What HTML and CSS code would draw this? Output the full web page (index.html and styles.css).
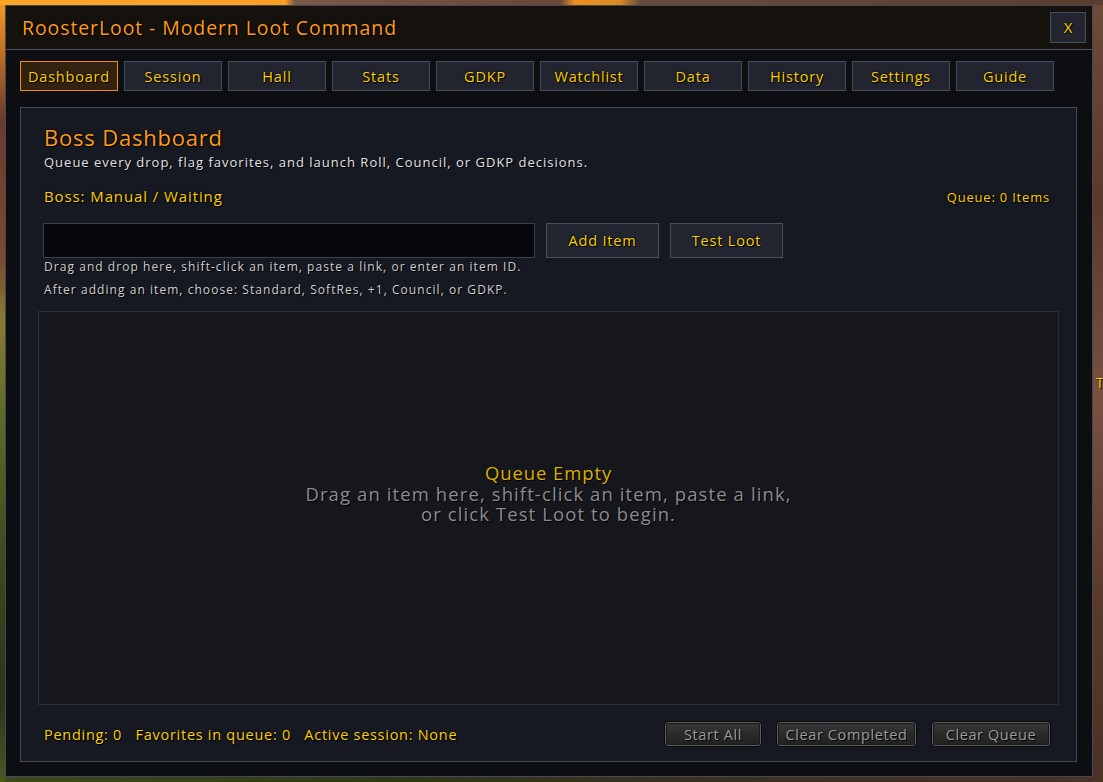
FILE: index.html
```html
<!DOCTYPE html>
<html>
<head>
<meta charset="utf-8">
<link rel="stylesheet" href="styles.css">
</head>
<body>
<div class="edge-text">T</div>
<div class="window">
  <div class="titlebar">
    <div class="title">RoosterLoot - Modern Loot Command</div>
    <button class="close">X</button>
  </div>
  <div class="body">
    <nav class="tabs">
      <div class="tab active">Dashboard</div>
      <div class="tab">Session</div>
      <div class="tab">Hall</div>
      <div class="tab">Stats</div>
      <div class="tab">GDKP</div>
      <div class="tab">Watchlist</div>
      <div class="tab">Data</div>
      <div class="tab">History</div>
      <div class="tab">Settings</div>
      <div class="tab">Guide</div>
    </nav>
    <section class="panel">
      <div class="head">
        <h1 class="heading">Boss Dashboard</h1>
        <p class="subtitle">Queue every drop, flag favorites, and launch Roll, Council, or GDKP decisions.</p>
        <div class="boss-row">
          <span class="boss">Boss: Manual / Waiting</span>
          <span class="count">Queue: 0 Items</span>
        </div>
        <div class="input-row">
          <div class="input"></div>
          <div class="btn">Add Item</div>
          <div class="btn">Test Loot</div>
        </div>
        <p class="hint first">Drag and drop here, shift-click an item, paste a link, or enter an item ID.</p>
        <p class="hint second">After adding an item, choose: Standard, SoftRes, +1, Council, or GDKP.</p>
      </div>
      <div class="queue">
        <div class="empty">
          <div class="empty-title">Queue Empty</div>
          <div class="empty-text">Drag an item here, shift-click an item, paste a link,</div>
          <div class="empty-text">or click Test Loot to begin.</div>
        </div>
      </div>
      <div class="footer">
        <div class="stats">Pending: 0&nbsp;&nbsp;&nbsp;Favorites in queue: 0&nbsp;&nbsp;&nbsp;Active session: None</div>
        <div class="actions">
          <div class="gbtn w-start">Start All</div>
          <div class="gbtn w-clearc">Clear Completed</div>
          <div class="gbtn w-clearq">Clear Queue</div>
        </div>
      </div>
    </section>
  </div>
</div>
</body>
</html>
```
FILE: styles.css
```css
* { box-sizing: border-box; }
html, body { margin: 0; padding: 0; }
body {
  width: 1103px;
  height: 782px;
  overflow: hidden;
  padding: 5px 0 0 5px;
  font-family: "Open Sans", "DejaVu Sans", sans-serif;
  background:
    linear-gradient(to right, #ffa526 0, #ff9f22 285px, #7a5848 295px, #6a4838 560px, #f09020 575px, #d88a20 620px, #6a4a3c 640px, #5a3e30 100%) 0 0 / 100% 5px no-repeat,
    linear-gradient(to bottom, #f39a24 0, #d07a22 40px, #6a3a2c 120px, #7a4a30 260px, #8a7a30 320px, #5a6a24 420px, #3c4a1c 560px, #2a3418 700px, #4a5a20 782px) 0 0 / 5px 100% no-repeat,
    linear-gradient(to bottom, #6e4a3a 0, #5a3a2e 200px, #7a5040 400px, #5a3a2e 600px, #4a3226 782px) 1093px 0 / 10px 100% no-repeat,
    linear-gradient(to right, #3c4a1c 0, #2e3818 400px, #3a3020 700px, #4a3226 100%) 0 777px / 100% 5px no-repeat,
    #4a3226;
  position: relative;
}
.edge-text {
  position: absolute;
  left: 1096px;
  top: 373px;
  color: #ffd100;
  font-size: 14px;
  text-shadow: 1px 1px 0 #000;
}
.window {
  width: 1088px;
  height: 772px;
  border: 1px solid #434857;
  background: #0c0e12;
  display: flex;
  flex-direction: column;
}
.titlebar {
  height: 44px;
  flex: none;
  background: #15110c;
  border-bottom: 1px solid #4a5062;
  display: flex;
  align-items: center;
  justify-content: space-between;
  padding: 0 6px 0 16px;
}
.title {
  color: #ff9a1c;
  font-size: 19.5px;
  letter-spacing: 0.9px;
  text-shadow: 1px 1px 0 #000, 0 0 2px #000;
}
.close {
  width: 36px;
  height: 31px;
  margin-top: -1px;
  background: #22252f;
  border: 1px solid #474c5a;
  color: #ffd100;
  font-family: inherit;
  font-size: 15px;
  text-shadow: 1px 1px 0 #000, 0 0 2px #000;
  padding: 0;
}
.body {
  flex: 1;
  display: flex;
  flex-direction: column;
  padding: 11px 15px 14px 14px;
}
.tabs {
  display: flex;
  gap: 6px;
  height: 30px;
  flex: none;
}
.tab {
  width: 98px;
  height: 30px;
  background: #22252f;
  border: 1px solid #474c5a;
  color: #ffd100;
  font-size: 14.5px;
  letter-spacing: 0.8px;
  display: flex;
  align-items: center;
  justify-content: center;
  text-shadow: 1px 1px 0 #000, 0 0 2px #000;
}
.tab.active {
  background: #33220f;
  border-color: #f08c1e;
}
.panel {
  margin-top: 16px;
  flex: 1;
  border: 1px solid #444a59;
  background: #161922;
  display: flex;
  flex-direction: column;
  padding: 0 17px 14px 17px;
}
.head {
  padding: 15px 0 0 6px;
}
.heading {
  margin: 0;
  font-weight: normal;
  font-size: 22px;
  letter-spacing: 0.8px;
  line-height: 28px;
  color: #ff9a1c;
  text-shadow: 1px 1px 0 #000, 0 0 2px #000;
}
.subtitle {
  margin: 3px 0 0;
  font-size: 13px;
  letter-spacing: 1px;
  line-height: 16px;
  color: #e2e2e2;
  text-shadow: 1px 1px 0 #000;
}
.boss-row {
  margin-top: 17px;
  display: flex;
  justify-content: space-between;
  align-items: baseline;
  padding-right: 9px;
}
.boss {
  color: #ffd100;
  font-size: 15px;
  letter-spacing: 0.9px;
  line-height: 18px;
  text-shadow: 1px 1px 0 #000, 0 0 2px #000;
}
.count {
  color: #ffd100;
  font-size: 13px;
  letter-spacing: 0.8px;
  text-shadow: 1px 1px 0 #000, 0 0 2px #000;
}
.input-row {
  margin-top: 17px;
  margin-left: -1px;
  display: flex;
  height: 35px;
  gap: 11px;
}
.input {
  width: 492px;
  height: 35px;
  background: #07080b;
  border: 1px solid #3b404d;
}
.btn {
  width: 113px;
  height: 35px;
  background: #22252f;
  border: 1px solid #4a4f5d;
  color: #ffd100;
  font-size: 14.5px;
  letter-spacing: 0.8px;
  display: flex;
  align-items: center;
  justify-content: center;
  text-shadow: 1px 1px 0 #000, 0 0 2px #000;
}
.hint {
  margin: 0;
  font-size: 12px;
  letter-spacing: 1.05px;
  line-height: 14px;
  color: #cfcfcf;
  text-shadow: 1px 1px 0 #000;
}
.hint.first { margin-top: 2px; }
.hint.second { margin-top: 9px; }
.queue {
  margin-top: 14px;
  flex: 1;
  background: #15171d;
  border: 1px solid #2a2e38;
  display: flex;
  align-items: center;
  justify-content: center;
  padding-bottom: 28px;
}
.empty { text-align: center; }
.empty-title {
  color: #dcb000;
  font-size: 18.5px;
  letter-spacing: 0.9px;
  line-height: 20.5px;
  text-shadow: 1px 1px 0 #000;
}
.empty-text {
  color: #8c8c8c;
  font-size: 18.5px;
  letter-spacing: 1.1px;
  line-height: 20.5px;
  text-shadow: 1px 1px 0 #000;
}
.footer {
  margin-top: 16px;
  height: 26px;
  display: flex;
  align-items: center;
  justify-content: space-between;
  padding-left: 6px;
  padding-right: 8px;
}
.stats {
  color: #ffd100;
  font-size: 14.5px;
  letter-spacing: 0.72px;
  text-shadow: 1px 1px 0 #000, 0 0 2px #000;
}
.actions {
  display: flex;
  gap: 14px;
}
.gbtn {
  height: 26px;
  border-radius: 4px;
  border: 1px solid #0a0a0a;
  background: linear-gradient(to bottom, #3a3a3a 0, #2a2a2a 50%, #202020 100%);
  box-shadow: inset 0 0 0 1px #5c5c5c, inset 0 0 0 2px #1a1a1a;
  color: #9c9c9c;
  font-size: 14.5px;
  letter-spacing: 0.6px;
  display: flex;
  align-items: center;
  justify-content: center;
  text-shadow: 1px 1px 0 #000;
}
.w-start { width: 98px; }
.w-clearc { width: 141px; }
.w-clearq { width: 120px; }
```
